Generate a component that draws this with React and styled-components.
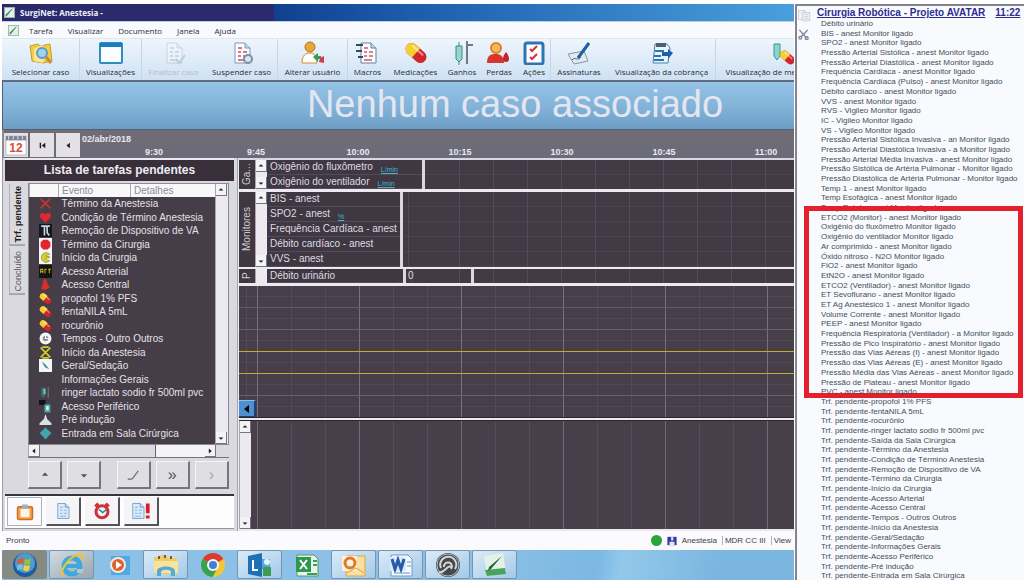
import React, { Component } from 'react'
import styled, { createGlobalStyle } from 'styled-components'

const GlobalStyle = createGlobalStyle`
  * {
    box-sizing: border-box;
  }
  body {
    margin: 0;
    background: #ffffff;
    font-family: "Liberation Sans", Arial, sans-serif;
  }
  button {
    padding: 0;
    border: 0;
    background: none;
    font: inherit;
    color: inherit;
  }
  svg {
    display: block;
  }
`

const ink = '#453d47'
const lineColor = '#dcd8e2'

const Page = styled.div`
  height: 100vh;
  display: grid;
  grid-template-columns: minmax(0, 1fr) 230px;
  padding: 4px 0 0 2px;
  overflow: hidden;
`

const Window = styled.main`
  display: flex;
  flex-direction: column;
  min-height: 0;
  overflow: hidden;
`

const TitleBar = styled.header`
  flex: none;
  height: 18px;
  display: flex;
  align-items: center;
  gap: 5px;
  padding-left: 2px;
  background: linear-gradient(90deg, #2b2a6c 272px, #10408f 272px, #1f62b0 55%, #4a9fdc);
  border-bottom: 1px solid #b9cde4;
  color: #f0f2fb;
  font: bold 8px "Open Sans", sans-serif;
`

const MenuBar = styled.nav`
  flex: none;
  height: 17px;
  display: flex;
  align-items: center;
  gap: 15px;
  padding-left: 6px;
  background: #f8fafd;
  border-bottom: 1px solid #dfe6ee;
  font: 8px "Open Sans", sans-serif;
  color: #2b2f38;
  svg {
    margin-right: -5px;
  }
`

const ToolBar = styled.div`
  flex: none;
  height: 41px;
  display: flex;
  background: linear-gradient(#eef5fc, #d9e8f7 70%, #cfe0f2);
  overflow: hidden;
`

const Tool = styled.button`
  flex: none;
  width: ${props => props.$width}px;
  display: flex;
  flex-direction: column;
  align-items: center;
  gap: 1px;
  padding-top: 2px;
  border-right: 1px solid ${props => props.$split ? '#c6d6e6' : 'transparent'};
  color: ${props => props.disabled ? '#b3bdc9' : '#252c38'};
  font: 8px/12px "Open Sans", sans-serif;
  white-space: nowrap;
`

const Banner = styled.div`
  flex: none;
  height: 50px;
  border-top: 2px solid #5d6c80;
  border-bottom: 1px solid #4b6079;
  border-left: 1px solid #4b6079;
  background: linear-gradient(#95c3e6, #82b2d8 55%, #6d9dc4);
  overflow: hidden;
`

const BannerText = styled.h1`
  width: 100vw;
  margin: 0;
  text-align: center;
  font-size: 38px;
  line-height: 45px;
  font-weight: 400;
  color: #e3e6f1;
`

const TimeBar = styled.div`
  flex: none;
  height: 28px;
  display: flex;
  background: linear-gradient(#716c76, #6a6b79);
  border-left: 2px solid #8b8a95;
  overflow: hidden;
`

const TimeButton = styled.button`
  flex: none;
  width: 24px;
  height: 24px;
  margin: 3px 2px 0 0;
  display: grid;
  place-items: center;
  background: #e3e1e6;
  color: #1d1a20;
`

const Scale = styled.div`
  flex: 1;
  min-width: 0;
  display: flex;
  flex-direction: column;
  justify-content: space-between;
  padding-top: 4px;
  color: #e9e8ef;
  font-weight: 700;
  font-size: 9px;
  line-height: 11px;
`

const Hours = styled.div`
  display: flex;
  padding-left: 21px;
  line-height: 12px;
`

const Hour = styled.span`
  flex: none;
  width: 102px;
  text-align: center;
`

const Body = styled.div`
  flex: 1;
  min-height: 0;
  display: grid;
  grid-template-columns: 235px minmax(0, 1fr);
  border-left: 1px solid #9b9ba5;
`

const TaskPane = styled.section`
  display: flex;
  flex-direction: column;
  min-height: 0;
  padding: 0 3px 2px 2px;
  background: #dad9e0;
  border-right: 1px solid #9fa7b5;
`

const PaneTitle = styled.h2`
  flex: none;
  height: 23px;
  margin: 0;
  border-top: 2px solid #ece9f0;
  background: #382f3a;
  color: #eeebf1;
  text-align: center;
  font-size: 12px;
  line-height: 20px;
`

const TaskArea = styled.div`
  flex: 1;
  min-height: 0;
  display: grid;
  grid-template-columns: 23px minmax(0, 1fr);
  padding-right: 5px;
  border-bottom: 2px solid #39343d;
`

const SideTabs = styled.div`
  display: flex;
  flex-direction: column;
  align-items: center;
  gap: 3px;
  padding-top: 3px;
`

const SideTab = styled.button`
  writing-mode: vertical-rl;
  transform: rotate(180deg);
  width: 16px;
  padding: 2px 0;
  border-top: 1px solid #77737d;
  border-right: 1px solid #b4b2bb;
  color: ${props => props.$active ? '#1e1a20' : '#5c5862'};
  font-weight: ${props => props.$active ? 700 : 400};
  font-size: 9px;
  line-height: 12px;
`

const TaskBox = styled.div`
  min-height: 0;
  display: flex;
  flex-direction: column;
  padding-top: 2px;
`

const TaskView = styled.div`
  flex: 1;
  min-height: 0;
  display: grid;
  grid-template-columns: minmax(0, 1fr) 13px;
  border: 1px solid #8b8992;
`

const TaskScroll = styled.div`
  min-height: 0;
  padding-bottom: 4px;
  background: ${ink};
`

const TaskTable = styled.table`
  width: 100%;
  height: 100%;
  table-layout: fixed;
  border-collapse: collapse;
  font-size: 10px;
  line-height: 11px;
  color: #e4e1e8;
  th {
    height: 13px;
    padding: 0 0 0 3px;
    background: #f8f7fa;
    border-left: 1px solid #aaa8b1;
    color: #8d8b95;
    font-weight: 400;
    text-align: left;
  }
  td {
    height: 13px;
    padding: 0 0 0 3px;
    white-space: nowrap;
  }
  td:first-child {
    padding-left: 9px;
  }
`

const Track = styled.div`
  display: flex;
  flex-direction: ${props => props.$across ? 'row' : 'column'};
  justify-content: space-between;
  background: ${props => props.$across ? '#f4f3f6' : '#eceaf0'};
  border-left: 1px solid #a8a6af;
`

const Arrow = styled.button`
  flex: none;
  width: 11px;
  height: 12px;
  display: grid;
  place-items: center;
  background: #f3f2f5;
  border-right: 1px solid #77747d;
  border-bottom: 1px solid #77747d;
  color: #231f26;
`

const Thumb = styled.span`
  flex: ${props => props.$size};
  background: #dcdbe1;
  border-right: 1px solid #66636c;
`

const HScroll = styled.div`
  flex: none;
  height: 13px;
  display: grid;
  grid-template-columns: minmax(0, 1fr) 13px;
  border-bottom: 1px solid #77747d;
`

const TaskActions = styled.div`
  flex: none;
  display: flex;
  justify-content: space-between;
  padding: 3px 0 5px;
`

const ActionButton = styled.button`
  width: 34px;
  height: 28px;
  margin-right: ${props => props.$gap ? 10 : 0}px;
  display: grid;
  place-items: center;
  background: #dfdee3;
  border: 1px solid #f5f4f7;
  border-right: 2px solid #77747d;
  border-bottom: 2px solid #77747d;
  color: ${props => props.disabled ? '#a5a3ab' : '#55525c'};
`

const ViewTabs = styled.div`
  flex: none;
  height: 33px;
  display: flex;
  gap: 4px;
  padding: 1px 2px;
  background: #fdfdfe;
  border-bottom: 1px solid #9795a0;
`

const ViewTab = styled.button`
  width: 35px;
  height: 29px;
  display: grid;
  place-items: center;
  background: ${props => props.$active ? '#fbfafc' : '#f5f4f7'};
  border: 1px solid ${props => props.$active ? '#a9b2c3' : '#f5f4f7'};
  border-right: ${props => props.$active ? '1px solid #a9b2c3' : '2px solid #55515b'};
  border-bottom: ${props => props.$active ? '1px solid #a9b2c3' : '2px solid #55515b'};
`

const Flowsheet = styled.section`
  min-height: 0;
  display: flex;
  flex-direction: column;
  padding-left: 1px;
  border-top: 2px solid ${lineColor};
  background: #eceaf0;
`

const Band = styled.div`
  flex: none;
  display: grid;
  grid-template-columns: 16px 12px auto minmax(0, 1fr);
  margin-bottom: ${props => props.$gap}px;
  background: #3f3741;
`

const BandName = styled.div`
  writing-mode: vertical-rl;
  transform: rotate(180deg);
  text-align: center;
  color: #cfccd4;
  font-size: 10px;
  line-height: 16px;
  height: 100%;
  max-height: 74px;
  overflow: hidden;
`

const BandRows = styled.div`
  width: ${props => props.$width}px;
  border-right: 3px solid ${lineColor};
`

const BandRow = styled.div`
  height: ${props => props.$tall ? 15 : 14}px;
  display: flex;
  align-items: center;
  gap: 8px;
  padding-left: 3px;
  border-bottom: 1px solid #544b56;
  color: #dedbe3;
  font-size: 10px;
  line-height: 12px;
  white-space: nowrap;
`

const Unit = styled.small`
  align-self: flex-end;
  color: #42b4cf;
  font-size: 7px;
  line-height: 9px;
  text-decoration: underline;
`

const BandGrid = styled.div`
  display: flex;
  background:
    repeating-linear-gradient(90deg, transparent 0 33px, #534b57 33px 34px) ${props => props.$shift}px 0,
    repeating-linear-gradient(transparent 0 14px, #4c434e 14px 15px),
    #433a45;
`

const ValueCell = styled.span`
  width: 68px;
  padding-left: 2px;
  border-right: 3px solid ${lineColor};
  color: #dedbe3;
  font-size: 10px;
  line-height: 14px;
`

const Vitals = styled.div`
  flex: 134;
  min-height: 0;
  display: flex;
  align-items: flex-end;
  border-bottom: 1px solid #2d262f;
  background:
    linear-gradient(#c4aa30, #c4aa30) 0 65px / 100% 1px no-repeat,
    linear-gradient(#c4aa30, #c4aa30) 0 87px / 100% 1px no-repeat,
    linear-gradient(#68616d, #68616d) 0 43px / 100% 1px no-repeat,
    linear-gradient(#625a66, #625a66) 0 21px / 100% 1px no-repeat,
    linear-gradient(#68616d, #68616d) 0 109px / 100% 1px no-repeat,
    repeating-linear-gradient(90deg, #77717f 0 1px, transparent 1px 102px) 18px 0,
    repeating-linear-gradient(90deg, #524a56 0 1px, transparent 1px 34px) 18px 0,
    repeating-linear-gradient(transparent 0 10px, #504854 10px 11px),
    #463e48;
`

const BackButton = styled.button`
  width: 17px;
  height: 17px;
  display: grid;
  place-items: center;
  background: #4d8fd0;
  border-top: 1px solid #8bbbe6;
  border-right: 2px solid #24406a;
  border-bottom: 1px solid #24406a;
`

const Notes = styled.div`
  flex: 110;
  min-height: 0;
  display: flex;
  margin: 2px 0;
  background:
    repeating-linear-gradient(90deg, #726b78 0 1px, transparent 1px 102px) 18px 0,
    repeating-linear-gradient(90deg, #554d59 0 1px, transparent 1px 34px) 18px 0,
    #483f4a;
  border-top: 1px solid #2d262f;
`

const StatusBar = styled.footer`
  flex: none;
  height: 19px;
  display: flex;
  align-items: center;
  gap: 5px;
  padding: 0 3px 0 4px;
  background: #fbfbfd;
  color: #3d3c45;
  font-size: 8px;
  white-space: nowrap;
`

const StatusItem = styled.span`
  padding-left: ${props => props.$line ? 2 : 0}px;
  border-left: ${props => props.$line ? '1px solid #b3b2bb' : '0'};
`

const Spacer = styled.span`
  flex: ${props => props.$size || 1};
`

const TaskBar = styled.div`
  flex: none;
  height: 30px;
  display: flex;
  gap: 2px;
  background: linear-gradient(100deg, #8cc0e6 60%, #7bb8e2 75%, #93c8ea 78%, #7bb6e0 90%);
`

const looks = {
  start: '#858a83',
  grey: 'linear-gradient(150deg, #d3dbe1, #98a6b0)',
  open: 'linear-gradient(150deg, #dbebf8, #a3c9e8)',
  plain: 'transparent'
}

const TaskBarButton = styled.button`
  flex: none;
  width: 45px;
  margin: 0 0 1px;
  display: grid;
  place-items: center;
  background: ${props => looks[props.$look]};
  border: 1px solid ${props => props.$look === 'open' || props.$look === 'grey' ? '#7795b0' : 'transparent'};
  border-radius: 2px;
`

const SidePanel = styled.aside`
  min-height: 0;
  display: grid;
  grid-template-columns: 20px minmax(0, 1fr);
  margin-left: 1px;
  border-top: 2px solid #85848c;
  border-left: 2px solid #85848c;
  background: #f9fafd;
  overflow: hidden;
`

const SideIcons = styled.div`
  display: flex;
  flex-direction: column;
  gap: 7px;
  padding: 3px 0 0 1px;
`

const Log = styled.div`
  min-height: 0;
  display: flex;
  flex-direction: column;
  margin-bottom: -1px;
`

const LogTitle = styled.a`
  flex: none;
  height: 13px;
  display: flex;
  gap: 10px;
  color: #2e2c92;
  font-weight: 700;
  font-size: 10px;
  line-height: 14px;
  white-space: nowrap;
`

const LogGroup = styled.ul`
  position: relative;
  flex: ${props => props.$count};
  min-height: 0;
  display: grid;
  grid-auto-rows: minmax(0, 1fr);
  margin: 0;
  padding: 0 0 0 4px;
  list-style: none;
  color: #454f5a;
  font-size: 8px;
  line-height: 10px;
  white-space: nowrap;
`

// the red frame lies over the rows before and after its group
const MarkedGroup = styled(LogGroup)`
  &::after {
    content: '';
    position: absolute;
    inset: -7px 1px -11px -13px;
    border: 5px solid #e3202b;
  }
`

const LogRow = styled.li`
  min-height: 0;
`

const monitorsLog = [
  'Débito urinário',
  'BIS - anest Monitor ligado',
  'SPO2 - anest Monitor ligado',
  'Pressão Arterial Sistólica - anest Monitor ligado',
  'Pressão Arterial Diastólica - anest Monitor ligado',
  'Frequência Cardíaca - anest Monitor ligado',
  'Frequência Cardíaca (Pulso) - anest Monitor ligado',
  'Débito cardíaco - anest Monitor ligado',
  'VVS - anest Monitor ligado',
  'RVS - Vigileo Monitor ligado',
  'IC  - Vigileo Monitor ligado',
  'VS - Vigileo Monitor ligado',
  'Pressão Arterial Sistólica Invasiva - an Monitor ligado',
  'Pressão Arterial Diastólica Invasiva - a Monitor ligado',
  'Pressão Arterial Média Invasiva - anest Monitor ligado',
  'Pressão Sistólica de Artéria Pulmonar - Monitor ligado',
  'Pressão Diastólica de Artéria Pulmonar - Monitor ligado',
  'Temp 1 - anest Monitor ligado',
  'Temp Esofágica - anest Monitor ligado',
  'Temp Retal - anest Monitor ligado'
]

const gasLog = [
  'ETCO2 (Monitor) - anest Monitor ligado',
  'Oxigênio do fluxômetro Monitor ligado',
  'Oxigênio do ventilador Monitor ligado',
  'Ar comprimido - anest Monitor ligado',
  'Óxido nitroso - N2O Monitor ligado',
  'FiO2 - anest Monitor ligado',
  'EtN2O - anest Monitor ligado',
  'ETCO2 (Ventilador) - anest Monitor ligado',
  'ET Sevoflurano - anest Monitor ligado',
  'ET Ag Anestésico 1 - anest Monitor ligado',
  'Volume Corrente - anest Monitor ligado',
  'PEEP - anest Monitor ligado',
  'Frequência Respiratória (Ventilador) - a Monitor ligado',
  'Pressão de Pico Inspiratório - anest Monitor ligado',
  'Pressão das Vias Aéreas (I) - anest Monitor ligado',
  'Pressão das Vias Aéreas (E) - anest Monitor ligado',
  'Pressão Média das Vias Aéreas - anest Monitor ligado',
  'Pressão de Plateau - anest Monitor ligado'
]

const pendingLog = [
  'PVC - anest Monitor ligado',
  'Trf. pendente-propofol 1% PFS',
  'Trf. pendente-fentaNILA 5mL',
  'Trf. pendente-rocurônio',
  'Trf. pendente-ringer lactato sodio fr 500ml pvc',
  'Trf. pendente-Saída da Sala Cirúrgica',
  'Trf. pendente-Término da Anestesia',
  'Trf. pendente-Condição de Término Anestesia',
  'Trf. pendente-Remoção de Dispositivo de VA',
  'Trf. pendente-Término da Cirurgia',
  'Trf. pendente-Início da Cirurgia',
  'Trf. pendente-Acesso Arterial',
  'Trf. pendente-Acesso Central',
  'Trf. pendente-Tempos - Outros Outros',
  'Trf. pendente-Início da Anestesia',
  'Trf. pendente-Geral/Sedação',
  'Trf. pendente-Informações Gerais',
  'Trf. pendente-Acesso Periférico',
  'Trf. pendente-Pré indução',
  'Trf. pendente-Entrada em Sala Cirúrgica'
]

const Doc = ({ marks = '#7fa3cf', edge = '#6f93bd', fill = '#fafcff' }) => (
  <g>
    <path d="M5 2h10l5 5v15H5z" fill={fill} stroke={edge} />
    <path d="M15 2v5h5" fill="#bcd9f0" stroke={edge} />
    <path d="M8 7h4M8 11h3M13 11h4M8 15h3M13 15h4M8 19h8" stroke={marks} strokeWidth="1.5" />
  </g>
)

const Pill = () => (
  <g transform="rotate(42 12 12)">
    <rect x="0" y="6" width="24" height="12" rx="6" fill="#d3232b" />
    <path d="M12 6H6a6 6 0 0 0 0 12h6z" fill="#f4cf32" />
    <path d="M5 9h13" stroke="#fff" strokeOpacity=".5" strokeWidth="2" strokeLinecap="round" />
  </g>
)

const pictures = {
  folder: <g><path d="M1 5l8-2 2 2 10-2 2 17-9 2-11-2z" fill="#f2cd41" stroke="#c59d2a" /><path d="M5 8l8-4 5 5-4 13-9-2z" fill="#fae795" /><circle cx="13" cy="12" r="5" fill="#9ed4f0" stroke="#5a9cc7" strokeWidth="2" /><path d="M17 16l5 6" stroke="#c58b39" strokeWidth="3" /></g>,
  window: <g><rect x="1" y="2" width="22" height="20" rx="1" fill="#fbfcff" stroke="#2b8fc4" strokeWidth="2" /><path d="M1 2h22v4H1z" fill="#1c7dbb" /></g>,
  finish: <g opacity=".35"><Doc marks="#8b8f9b" edge="#9a9fae" /><path d="M14 18l3 4 6-8" stroke="#8b8f9b" strokeWidth="2" fill="none" /></g>,
  suspend: <g><Doc marks="#dc4a4f" edge="#7d97b4" /><circle cx="18" cy="18" r="4" fill="#dbe5ee" stroke="#7b91a7" strokeWidth="2" /></g>,
  user: <g><circle cx="9" cy="6" r="5" fill="#e9a63a" stroke="#b8701c" /><path d="M1 22c0-8 4-10 8-10s7 3 7 10z" fill="#fff" stroke="#d98a28" /><path d="M12 16l5-4v3h3v3h-3v3z" fill="#2f9c50" /><path d="M23 22l-5-1 1-4 4-2z" fill="#d63a49" /></g>,
  macros: <g><Doc marks="#d35a61" edge="#66829f" /><path d="M0 4h7M0 10h6M2 16h5" stroke="#35495f" strokeWidth="2" /></g>,
  pill: <Pill />,
  gain: <g><path d="M6 5h6v13l-3 3-3-3z" fill="#9bd3cf" stroke="#2f8f8d" /><path d="M9 1v4M9 21v3" stroke="#2f8f8d" /><path d="M17 0v23M17 4h6" stroke="#6f7b8c" strokeWidth="2" /></g>,
  loss: <g><circle cx="9" cy="7" r="5" fill="#f2b95a" stroke="#d9822a" strokeWidth="2" /><path d="M0 22c0-9 5-9 9-9s8 2 8 9z" fill="#d8352b" /><path d="M19 11c4 5 4 10 0 10s-4-5 0-10z" fill="#c7222b" /></g>,
  actions: <g><rect x="3" y="2" width="18" height="21" rx="2" fill="#fdfdff" stroke="#2c75b3" strokeWidth="3" /><path d="M8 8l2 2 5-5M8 16l2 2 5-5" stroke="#d3323b" strokeWidth="2" fill="none" /></g>,
  sign: <g><path d="M1 13l16-3 4 10-14 3z" fill="#e3e9f0" stroke="#8794a6" /><path d="M22 2L11 17" stroke="#1f609f" strokeWidth="3" /><path d="M5 19c3-4 5 2 9-3" stroke="#55657a" fill="none" /></g>,
  billing: <g><path d="M5 3h12l3 4-2 15H3z" fill="#e8f3fb" stroke="#4b7ea8" /><path d="M6 2h10v4H6z" fill="#4f5e72" /><path d="M5 10h9M4 15h7M4 19h10" stroke="#2379b6" strokeWidth="2" /><path d="M23 12l-5-4v3h-6v4h6v3z" fill="#235fae" /></g>,
  meds: <g><path d="M3 3h6v12l-3 4-3-4z" fill="#8fd3cb" stroke="#2f9c93" /><g transform="translate(8 8) scale(.7)"><Pill /></g></g>,
  calendar: <g><rect x="1" y="3" width="22" height="20" fill="#fff" stroke="#b7b3bd" /><path d="M1 2h22v5H1z" fill="#7b8799" /><path d="M4 1v5M9 1v5M14 1v5M19 1v5" stroke="#dfe4ec" /></g>,
  pen: <g><rect x="1" y="1" width="22" height="22" fill="#e4f0e8" stroke="#9cb5ab" strokeWidth="2" /><path d="M18 4L7 18l-3 2 1-4z" fill="#3b8f55" stroke="#1f6b4a" /></g>,
  cross: <path d="M3 3l18 18M21 3L3 21" stroke="#c9332d" strokeWidth="3" />,
  heart: <path d="M12 22L2 11C0 3 9 1 12 7c3-6 12-4 10 4z" fill="#e5272d" />,
  tube: <g><rect width="24" height="24" fill="#17181d" /><path d="M4 4h16M10 4v17M15 4v12l4 5" stroke="#c8d8e4" strokeWidth="3" fill="none" /></g>,
  stop: <g><rect width="24" height="24" fill="#f5f4f6" /><path d="M8 3h8l5 5v8l-5 5H8l-5-5V8z" fill="#df2631" /></g>,
  begin: <g><rect width="24" height="24" fill="#f5f4f6" /><path d="M20 6A9 9 0 1 0 20 18L13 16v-3h6v-3h-6V8z" fill="#d4d02b" stroke="#77761c" /></g>,
  art: <g><rect width="24" height="24" fill="#15140f" /><path d="M3 15V8h4v7M3 12h4M11 15V8h3M17 8h5M19 8v7" stroke="#b2a62b" strokeWidth="2" fill="none" /></g>,
  central: <path d="M10 1c6 3 2 8 10 14-4 8-14 8-17 4 6-5 2-10 7-18z" fill="#de2b2d" />,
  clock: <g><circle cx="12" cy="12" r="11" fill="#f5f4f7" /><circle cx="12" cy="12" r="5" fill="#8e8b97" /><path d="M12 7v5h4" stroke="#fff" strokeWidth="2" fill="none" /></g>,
  start: <path d="M3 3l18 18M21 3L3 21M6 2h12M6 22h12" stroke="#d1cc28" strokeWidth="3" />,
  needle: <g><rect width="24" height="24" fill="#f3f6f6" /><path d="M5 5l6 4 8 10-8-4z" fill="#3b8d90" /></g>,
  drip: <g><path d="M4 3h8v14l-4 5-4-5z" fill="#3b6b70" /><path d="M8 5h4v10H8z" fill="#74c3b9" /><path d="M17 2v20" stroke="#777" strokeWidth="2" /></g>,
  peripheral: <g><rect width="12" height="9" fill="#131217" /><path d="M10 8h11v15H10z" fill="#4aa6a8" /><path d="M13 11h5v8h-5z" fill="#d1f1ec" /></g>,
  mask: <path d="M12 2l3 9 8 8v3H1v-3l8-8z" fill="#d8dfe4" />,
  room: <path d="M12 1l11 10-11 12L1 11z" fill="#46a2ad" stroke="#237281" />,
  clipboard: <g><rect x="2" y="5" width="20" height="17" rx="2" fill="#f1a04b" stroke="#cf6f22" strokeWidth="2" /><rect x="6" y="8" width="12" height="11" fill="#fff4e8" /><path d="M8 2h8v6H8z" fill="#a8acb8" /></g>,
  page: <Doc marks="#8bb5dc" edge="#5f8fc2" fill="#d9eafa" />,
  alarm: <g><circle cx="12" cy="13" r="8" fill="#eaf4f6" stroke="#cf3039" strokeWidth="4" /><path d="M3 6l4-4M21 6l-4-4" stroke="#cf3039" strokeWidth="4" /><path d="M8 10l5 4 5-4" stroke="#2c7c9b" strokeWidth="2" fill="none" /></g>,
  alert: <g><g transform="translate(-4 0)"><Doc marks="#8bb5dc" edge="#5f8fc2" fill="#d9eafa" /></g><path d="M21 2v13M21 18v4" stroke="#d3202c" strokeWidth="5" /></g>,
  edit: <path d="M3 19h6c3 0 5-6 10-11M19 8l2-3" stroke="#6b6873" strokeWidth="2" fill="none" />,
  disk: <g><rect x="1" y="2" width="22" height="20" fill="#3638a8" /><path d="M10 2h5v9h-5zM6 14h12v8H6z" fill="#e6e7f5" /></g>,
  windows: <g><circle cx="12" cy="12" r="12" fill="#1d5d9b" /><circle cx="12" cy="10" r="10" fill="#4f9ccc" /><path d="M5 7c2-2 4-2 6-1l-1 5c-2-1-4-1-6 1z" fill="#e8582b" /><path d="M12 6c2 1 4 1 6-1l-1 6c-2 1-4 1-6 0z" fill="#8fc53d" /><path d="M4 13c2-2 4-2 6-1l-1 5c-2-1-4-1-5 1z" fill="#6cc3f0" /><path d="M11 12c2 1 4 1 6 0l-1 5c-2 2-4 1-6 0z" fill="#f8cf3c" /></g>,
  ie: <g><circle cx="12" cy="13" r="8" fill="none" stroke="#3da9df" strokeWidth="5" /><path d="M5 13h15" stroke="#3da9df" strokeWidth="4" /><path d="M17 18h6" stroke="#b6c6ce" strokeWidth="4" /><path d="M3 23C-2 17 13-1 22 2c2 1 1 4 0 6" stroke="#f0c62c" strokeWidth="2" fill="none" /></g>,
  media: <g><rect x="4" y="3" width="19" height="19" fill="#4fa9df" /><circle cx="11" cy="12" r="8" fill="#f5e8e1" /><circle cx="11" cy="12" r="6" fill="#df602c" /><path d="M9 8l6 4-6 4z" fill="#fff" /></g>,
  explorer: <g><path d="M0 4h5l2-2h5l2 3h9v16H0z" fill="#eecb68" /><path d="M0 8h24v12H0z" fill="#f8e39c" /><path d="M3 23v-5c0-6 18-6 18 0v5h-4v-4c0-3-10-3-10 0v4z" fill="#55abd8" /><path d="M5 3v3M11 2v3M17 3v3" stroke="#785e38" strokeWidth="2" /></g>,
  chrome: <g><circle cx="12" cy="12" r="12" fill="#f2c731" /><path d="M12 12L1.600 6a12 12 0 0 1 20.800 0z" fill="#db3c30" /><path d="M12 12L1.600 6a12 12 0 0 0 10 18l5-9z" fill="#36a055" /><circle cx="12" cy="12" r="6" fill="#f6f6f6" /><circle cx="12" cy="12" r="4" fill="#3f7fd6" /></g>,
  lync: <g><path d="M0 3l14-3v24L0 21z" fill="#1b70b6" /><path d="M5 7v10h5" stroke="#fff" strokeWidth="2" fill="none" /><path d="M14 6h8v10h-8z" fill="#55a8de" /><circle cx="19" cy="9" r="3" fill="#e4f2fb" /><path d="M15 14h8v9h-8z" fill="#3c9c54" /></g>,
  excel: <g><path d="M2 2h17l4 4v17H2z" fill="#e9f5ea" stroke="#4f9c61" /><path d="M1 4h15v15H1z" fill="#2f9850" /><path d="M5 7l7 9M12 7l-7 9" stroke="#fff" strokeWidth="2" /><path d="M18 8h4M18 12h4M12 21h10" stroke="#3d9d58" strokeWidth="2" /></g>,
  outlook: <g><path d="M4 3h19v20H4z" fill="#fae0a0" stroke="#e0a33c" /><path d="M0 3h15v15H0z" fill="#f9f1e6" /><circle cx="8" cy="10" r="5" fill="none" stroke="#df7c22" strokeWidth="3" /><path d="M5 20l9-5 8 5" stroke="#df9d35" fill="none" /></g>,
  word: <g><path d="M2 2h17l4 4v17H2z" fill="#f5f9fe" stroke="#7199c6" /><path d="M1 4h16v14H1z" fill="#dbe9f7" /><path d="M3 6l3 10 3-9 3 9 3-10" stroke="#235ba8" strokeWidth="3" fill="none" /><path d="M18 9h4M18 13h4M6 20h15" stroke="#6f98c8" /></g>,
  remote: <g><circle cx="12" cy="12" r="12" fill="#45494e" /><circle cx="12" cy="12" r="11" stroke="#b9bec2" /><path d="M5 15a8 8 0 1 1 14 1M8 14a4 4 0 1 1 7 2M3 19c6 2 8-8 12-5" stroke="#d3d7da" strokeWidth="2" fill="none" /></g>,
  surgi: <g><path d="M1 3l19-3 3 20-19 3z" fill="#e4f2e6" /><path d="M2 17l20-2 1 6-19 2z" fill="#47a55b" /><path d="M19 3L8 16l-3 2 1-4z" fill="#2a6045" /></g>,
  copy: <g stroke="#b0b6c4" fill="#eef1f7"><rect x="1" y="3" width="12" height="16" /><rect x="9" y="6" width="13" height="16" /><path d="M12 10h7M12 14h7M12 18h7" /></g>,
  cut: <g stroke="#7d8797" strokeWidth="3" fill="none"><path d="M3 2l15 17M21 2L7 17" /><circle cx="5" cy="19" r="3" /><circle cx="19" cy="20" r="3" /></g>
}

const Icon = ({ name, size = 24 }) => (
  <svg width={size} height={size} viewBox="0 0 24 24" fill="none" aria-hidden="true">{pictures[name]}</svg>
)

const arrows = {
  up: 'M1 6l4-4 4 4z',
  down: 'M1 4l4 4 4-4z',
  left: 'M7 1L2 5l5 4z',
  right: 'M3 1l5 4-5 4z',
  first: 'M1 1h2v8H1zM9 1L4 5l5 4z'
}

const Tri = ({ to, size = 6 }) => (
  <svg width={size} height={size} viewBox="0 0 10 10" aria-hidden="true"><path d={arrows[to]} fill="currentColor" /></svg>
)

const tools = [
  { label: 'Selecionar caso', icon: 'folder', width: 78, split: true },
  { label: 'Visualizações', icon: 'window', width: 62, split: true },
  { label: 'Finalizar caso', icon: 'finish', width: 64, disabled: true },
  { label: 'Suspender caso', icon: 'suspend', width: 72, split: true },
  { label: 'Alterar usuário', icon: 'user', width: 70, split: true },
  { label: 'Macros', icon: 'macros', width: 40 },
  { label: 'Medicações', icon: 'pill', width: 56 },
  { label: 'Ganhos', icon: 'gain', width: 37 },
  { label: 'Perdas', icon: 'loss', width: 37 },
  { label: 'Ações', icon: 'actions', width: 33, split: true },
  { label: 'Assinaturas', icon: 'sign', width: 57 },
  { label: 'Visualização da cobrança', icon: 'billing', width: 108, split: true },
  { label: 'Visualização de medicamentos', icon: 'meds', width: 134 }
]

const tasks = [
  ['cross', 'Término da Anestesia'],
  ['heart', 'Condição de Término Anestesia'],
  ['tube', 'Remoção de Dispositivo de VA'],
  ['stop', 'Término da Cirurgia'],
  ['begin', 'Início da Cirurgia'],
  ['art', 'Acesso Arterial'],
  ['central', 'Acesso Central'],
  ['pill', 'propofol 1% PFS'],
  ['pill', 'fentaNILA 5mL'],
  ['pill', 'rocurônio'],
  ['clock', 'Tempos - Outro Outros'],
  ['start', 'Início da Anestesia'],
  ['needle', 'Geral/Sedação'],
  [null, 'Informações Gerais'],
  ['drip', 'ringer lactato sodio fr 500ml pvc'],
  ['peripheral', 'Acesso Periférico'],
  ['mask', 'Pré indução'],
  ['room', 'Entrada em Sala Cirúrgica']
]

const taskbarApps = [
  ['windows', 'start', 'Iniciar'],
  ['ie', 'grey', 'Internet Explorer'],
  ['media', 'plain', 'Media Player'],
  ['explorer', 'open', 'Explorador'],
  ['chrome', 'plain', 'Chrome'],
  ['lync', 'open', 'Lync'],
  ['excel', 'plain', 'Excel'],
  ['outlook', 'open', 'Outlook'],
  ['word', 'open', 'Word'],
  ['remote', 'open', 'Acesso remoto'],
  ['surgi', 'open', 'SurgiNet']
]

const CalendarDay = styled.span`
  grid-area: 1 / 1;
  padding-top: 6px;
  color: #dd4a2e;
  font-weight: 700;
  font-size: 12px;
  line-height: 14px;
`

const CalendarArt = styled.span`
  grid-area: 1 / 1;
`

const StatusDot = styled.span`
  width: 11px;
  height: 11px;
  border-radius: 50%;
  background: #29a53a;
`

const IconCol = styled.col`
  width: 29px;
`

const EventCol = styled.col`
  width: 72px;
`

class App extends Component {
  constructor (props) {
    super(props)

    this.state = { sideTab: 'pending', viewTab: 'clipboard' }
  }

  renderTasks () {
    const { sideTab, viewTab } = this.state
    return (
      <TaskPane>
        <PaneTitle>Lista de tarefas pendentes</PaneTitle>
        <TaskArea>
          <SideTabs>
            <SideTab $active={sideTab === 'pending'} onClick={() => this.setState({ sideTab: 'pending' })}>Trf. pendente</SideTab>
            <SideTab $active={sideTab === 'done'} onClick={() => this.setState({ sideTab: 'done' })}>Concluído</SideTab>
          </SideTabs>
          <TaskBox>
            <TaskView>
              <TaskScroll>
                <TaskTable>
                  <colgroup>
                    <IconCol />
                    <EventCol />
                    <col />
                  </colgroup>
                  <thead>
                    <tr><th aria-label="Ícone" /><th>Evento</th><th>Detalhes</th></tr>
                  </thead>
                  <tbody>
                    {tasks.map(([icon, name]) => (
                      <tr key={name}>
                        <td>{icon && <Icon name={icon} size={13} />}</td>
                        <td colSpan={2}>{name}</td>
                      </tr>
                    ))}
                  </tbody>
                </TaskTable>
              </TaskScroll>
              <Track>
                <Arrow aria-label="Subir"><Tri to="up" /></Arrow>
                <Arrow aria-label="Descer"><Tri to="down" /></Arrow>
              </Track>
            </TaskView>
            <HScroll>
              <Track $across>
                <Arrow aria-label="Esquerda"><Tri to="left" /></Arrow>
                <Thumb $size={7} />
                <Spacer $size={3} />
                <Arrow aria-label="Direita"><Tri to="right" /></Arrow>
              </Track>
            </HScroll>
            <TaskActions>
              <ActionButton aria-label="Acima"><Tri to="up" size={8} /></ActionButton>
              <ActionButton aria-label="Abaixo" $gap><Tri to="down" size={8} /></ActionButton>
              <ActionButton aria-label="Editar"><Icon name="edit" size={14} /></ActionButton>
              <ActionButton aria-label="Avançar tudo">»</ActionButton>
              <ActionButton aria-label="Avançar" disabled>›</ActionButton>
            </TaskActions>
          </TaskBox>
        </TaskArea>
        <ViewTabs>
          {['clipboard', 'page', 'alarm', 'alert'].map(name => (
            <ViewTab key={name} aria-label={name} $active={viewTab === name} onClick={() => this.setState({ viewTab: name })}>
              <Icon name={name} size={18} />
            </ViewTab>
          ))}
        </ViewTabs>
      </TaskPane>
    )
  }

  renderFlowsheet () {
    return (
      <Flowsheet>
        <Band $gap={3}>
          <BandName>Ga...</BandName>
          <Track>
            <Arrow aria-label="Subir gases"><Tri to="up" /></Arrow>
            <Arrow aria-label="Descer gases"><Tri to="down" /></Arrow>
          </Track>
          <BandRows $width={158}>
            <BandRow $tall>Oxigênio do fluxômetro<Unit>L/min</Unit></BandRow>
            <BandRow>Oxigênio do ventilador<Unit>L/min</Unit></BandRow>
          </BandRows>
          <BandGrid $shift={1} />
        </Band>
        <Band $gap={2}>
          <BandName>Monitores</BandName>
          <Track>
            <Arrow aria-label="Subir monitores"><Tri to="up" /></Arrow>
            <Arrow aria-label="Descer monitores"><Tri to="down" /></Arrow>
          </Track>
          <BandRows $width={136}>
            <BandRow $tall>BIS - anest</BandRow>
            <BandRow $tall>SPO2 - anest<Unit>%</Unit></BandRow>
            <BandRow $tall>Frequência Cardíaca - anest</BandRow>
            <BandRow $tall>Débito cardíaco - anest</BandRow>
            <BandRow $tall>VVS - anest</BandRow>
          </BandRows>
          <BandGrid $shift={23} />
        </Band>
        <Band $gap={3}>
          <BandName>P</BandName>
          <Track />
          <BandRows $width={139}><BandRow>Débito urinário</BandRow></BandRows>
          <BandGrid $shift={20}><ValueCell>0</ValueCell></BandGrid>
        </Band>
        <Vitals>
          <BackButton aria-label="Voltar"><Tri to="left" size={10} /></BackButton>
        </Vitals>
        <Notes>
          <Track>
            <Arrow aria-label="Subir notas"><Tri to="up" /></Arrow>
            <Arrow aria-label="Descer notas"><Tri to="down" /></Arrow>
          </Track>
        </Notes>
      </Flowsheet>
    )
  }

  render () {
    return (
      <Page>
        <GlobalStyle />
        <Window>
          <TitleBar><Icon name="pen" size={11} />SurgiNet: Anestesia -</TitleBar>
          <MenuBar>
            <Icon name="pen" size={11} />
            {['Tarefa', 'Visualizar', 'Documento', 'Janela', 'Ajuda'].map(item => <button key={item}>{item}</button>)}
          </MenuBar>
          <ToolBar>
            {tools.map(tool => (
              <Tool key={tool.label} $width={tool.width} $split={tool.split} disabled={tool.disabled}>
                <Icon name={tool.icon} />
                {tool.label}
              </Tool>
            ))}
          </ToolBar>
          <Banner><BannerText>Nenhum caso associado</BannerText></Banner>
          <TimeBar>
            <TimeButton aria-label="Calendário">
              <CalendarArt><Icon name="calendar" size={22} /></CalendarArt>
              <CalendarDay>12</CalendarDay>
            </TimeButton>
            <TimeButton aria-label="Início"><Tri to="first" size={7} /></TimeButton>
            <TimeButton aria-label="Anterior"><Tri to="left" size={7} /></TimeButton>
            <Scale>
              <span>02/abr/2018</span>
              <Hours>
                {['9:30', '9:45', '10:00', '10:15', '10:30', '10:45', '11:00'].map(hour => <Hour key={hour}>{hour}</Hour>)}
              </Hours>
            </Scale>
          </TimeBar>
          <Body>
            {this.renderTasks()}
            {this.renderFlowsheet()}
          </Body>
          <StatusBar>
            <StatusItem>Pronto</StatusItem>
            <Spacer />
            <StatusDot />
            <Icon name="disk" size={10} />
            <StatusItem>Anestesia</StatusItem>
            <StatusItem $line>MDR CC III</StatusItem>
            <StatusItem $line>View</StatusItem>
          </StatusBar>
          <TaskBar>
            {taskbarApps.map(([icon, look, label]) => (
              <TaskBarButton key={icon} $look={look} aria-label={label}><Icon name={icon} /></TaskBarButton>
            ))}
          </TaskBar>
        </Window>
        <SidePanel>
          <SideIcons>
            <Icon name="copy" size={13} />
            <Icon name="cut" size={11} />
          </SideIcons>
          <Log>
            <LogTitle href="#caso"><span>Cirurgia Robótica - Projeto AVATAR</span><span>11:22</span></LogTitle>
            <LogGroup $count={monitorsLog.length}>
              {monitorsLog.map(text => <LogRow key={text}>{text}</LogRow>)}
            </LogGroup>
            <MarkedGroup $count={gasLog.length}>
              {gasLog.map(text => <LogRow key={text}>{text}</LogRow>)}
            </MarkedGroup>
            <LogGroup $count={pendingLog.length}>
              {pendingLog.map(text => <LogRow key={text}>{text}</LogRow>)}
            </LogGroup>
          </Log>
        </SidePanel>
      </Page>
    )
  }
}

export default App
